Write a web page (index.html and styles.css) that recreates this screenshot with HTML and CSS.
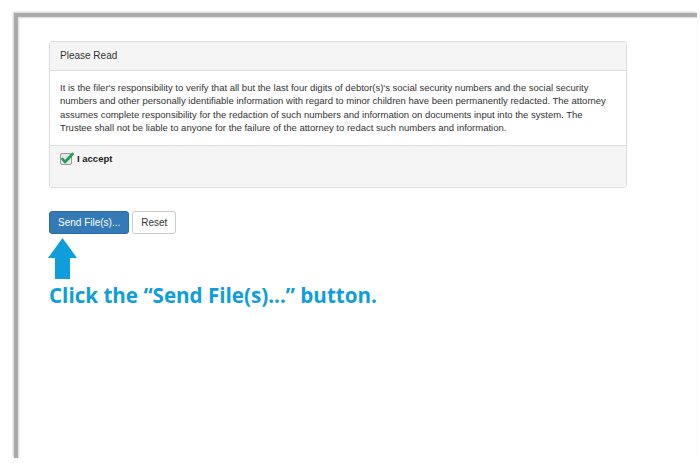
FILE: index.html
```html
<!DOCTYPE html>
<html lang="en">
<head>
  <meta charset="UTF-8" />
  <title>Send Files</title>
  <link rel="stylesheet" href="styles.css">
</head>
<body>

  <div class="frame">
    <div class="panel">
      <div class="panel-heading">Please Read</div>
      <div class="panel-body">
        It is the filer's responsibility to verify that all but the last four digits of debtor(s)'s social security numbers and the social security numbers and other personally identifiable information with regard to minor children have been permanently redacted. The attorney assumes complete responsibility for the redaction of such numbers and information on documents input into the system. The Trustee shall not be liable to anyone for the failure of the attorney to redact such numbers and information.
      </div>
      <div class="panel-footer">
        <label class="accept">
          <svg class="check" width="14" height="13" viewBox="0 0 14 13">
            <rect x="0.5" y="1.5" width="11" height="11" rx="1.5" fill="#e6e6e6" stroke="#9a9a9a" />
            <path d="M2.5 7 L5 10 L12.5 2" fill="none" stroke="#1f9e54" stroke-width="2.6" stroke-linecap="round" stroke-linejoin="round" />
          </svg>
          I accept
        </label>
      </div>
    </div>

    <div class="actions">
      <button class="btn btn-primary">Send File(s)...</button>
      <button class="btn">Reset</button>
    </div>

    <svg class="arrow" width="30" height="41" viewBox="0 0 30 41">
      <polygon points="14.5,0 29,20 22,20 22,41 7,41 7,20 0,20" fill="#0d9edb" />
    </svg>

    <p class="hint">Click the “Send File(s)...” button.</p>
  </div>

</body>
</html>
```

FILE: styles.css
```css
body {
  margin: 0;
  background-color: #fff;
  font-family: "Liberation Sans", Arial, sans-serif;
  color: #333;
}

.frame {
  margin: 13px 0 0 14px;
  width: 683px;
  height: 445px;
  padding: 24px 0 0 31px;
  box-sizing: border-box;
  border-top: 4px solid #aaa;
  border-left: 4px solid #aaa;
  box-shadow: -1px -1px 2px rgba(0,0,0,0.2), inset 1px 1px 2px rgba(0,0,0,0.15);
}

.panel {
  width: 578px;
  box-sizing: border-box;
  border: 1px solid #ddd;
  border-radius: 3px;
  background-color: #fff;
  font-size: 9.5px;
  line-height: 13.6px;
}

.panel-heading {
  background-color: #f5f5f5;
  border-bottom: 1px solid #ddd;
  padding: 7px 10px;
  font-size: 10px;
}

.panel-body {
  padding: 10px;
}

.panel-footer {
  background-color: #f5f5f5;
  border-top: 1px solid #ddd;
  padding: 6px 10px 21px;
}

.accept {
  display: flex;
  align-items: center;
  gap: 3px;
  font-weight: bold;
  color: #222;
}

.actions {
  display: flex;
  gap: 3px;
  margin-top: 23px;
}

.btn {
  font-family: "Liberation Sans", Arial, sans-serif;
  font-size: 10px;
  line-height: 13.6px;
  padding: 4px 8px;
  height: 23px;
  border: 1px solid #ccc;
  border-radius: 3px;
  background-color: #fff;
  color: #333;
}

.btn-primary {
  background-color: #337ab7;
  border-color: #2e6da4;
  color: #fff;
}

.arrow {
  display: block;
  margin: 4px 0 0 -1px;
}

.hint {
  margin: 3px 0 0;
  font-family: "Open Sans", sans-serif;
  font-weight: bold;
  font-size: 20.6px;
  line-height: 26px;
  color: #0d9edb;
}
```
